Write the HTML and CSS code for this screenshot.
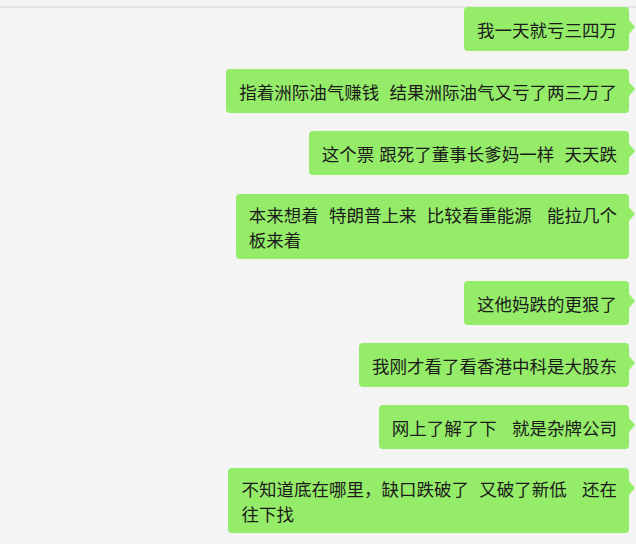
FILE: index.html
```html
<!DOCTYPE html>
<html lang="zh-CN">
<head>
    <meta charset="UTF-8">
    <meta name="viewport" content="width=device-width, initial-scale=1.0">
    <title>聊天记录</title>
    <link rel="stylesheet" href="styles.css">
</head>
<body>
    <div class="chat">
        <div class="chat-top"></div>

        <div class="messages">
            <div class="msg"><div class="bubble">我一天就亏三四万</div></div>
            <div class="msg"><div class="bubble">指着洲际油气赚钱&nbsp;&nbsp;结果洲际油气又亏了两三万了</div></div>
            <div class="msg"><div class="bubble">这个票 跟死了董事长爹妈一样&nbsp;&nbsp;天天跌</div></div>
            <div class="msg multi"><div class="bubble">本来想着&nbsp;&nbsp;特朗普上来&nbsp;&nbsp;比较看重能源&nbsp;&nbsp;&nbsp;能拉几个<br>板来着</div></div>
            <div class="msg"><div class="bubble">这他妈跌的更狠了</div></div>
            <div class="msg"><div class="bubble">我刚才看了看香港中科是大股东</div></div>
            <div class="msg"><div class="bubble">网上了解了下&nbsp;&nbsp;&nbsp;就是杂牌公司</div></div>
            <div class="msg multi"><div class="bubble">不知道底在哪里，缺口跌破了&nbsp;&nbsp;又破了新低&nbsp;&nbsp;&nbsp;还在<br>往下找</div></div>
        </div>
    </div>
</body>
</html>
```

FILE: styles.css
```css
body, html {
    margin: 0;
    padding: 0;
    font-family: "Noto Sans CJK SC", "Noto Sans", sans-serif;
    background-color: #f4f4f4;
}

.chat {
    width: 636px;
    height: 544px;
    overflow: hidden;
}

.chat-top {
    height: 6px;
    border-bottom: 2px solid #e6e6e6;
}

.messages {
    display: flex;
    flex-direction: column;
    gap: 18px;
    padding-right: 7px;
    margin-top: -1px;
}

.msg {
    display: flex;
    justify-content: flex-end;
}

.msg.multi {
    margin-top: 1px;
    margin-bottom: 4px;
}

.bubble {
    position: relative;
    display: flex;
    align-items: center;
    box-sizing: border-box;
    min-height: 44px;
    background-color: #95ec69;
    color: #1b1b1b;
    font-size: 17.5px;
    line-height: 25px;
    word-spacing: 1.2px;
    padding: 7.5px 12px 7.5px 13px;
    border-radius: 4px;
}

/* little tail on the right */
.bubble::after {
    content: "";
    position: absolute;
    top: 13px;
    right: -6px;
    border-top: 7px solid transparent;
    border-bottom: 7px solid transparent;
    border-left: 6px solid #95ec69;
}
```
